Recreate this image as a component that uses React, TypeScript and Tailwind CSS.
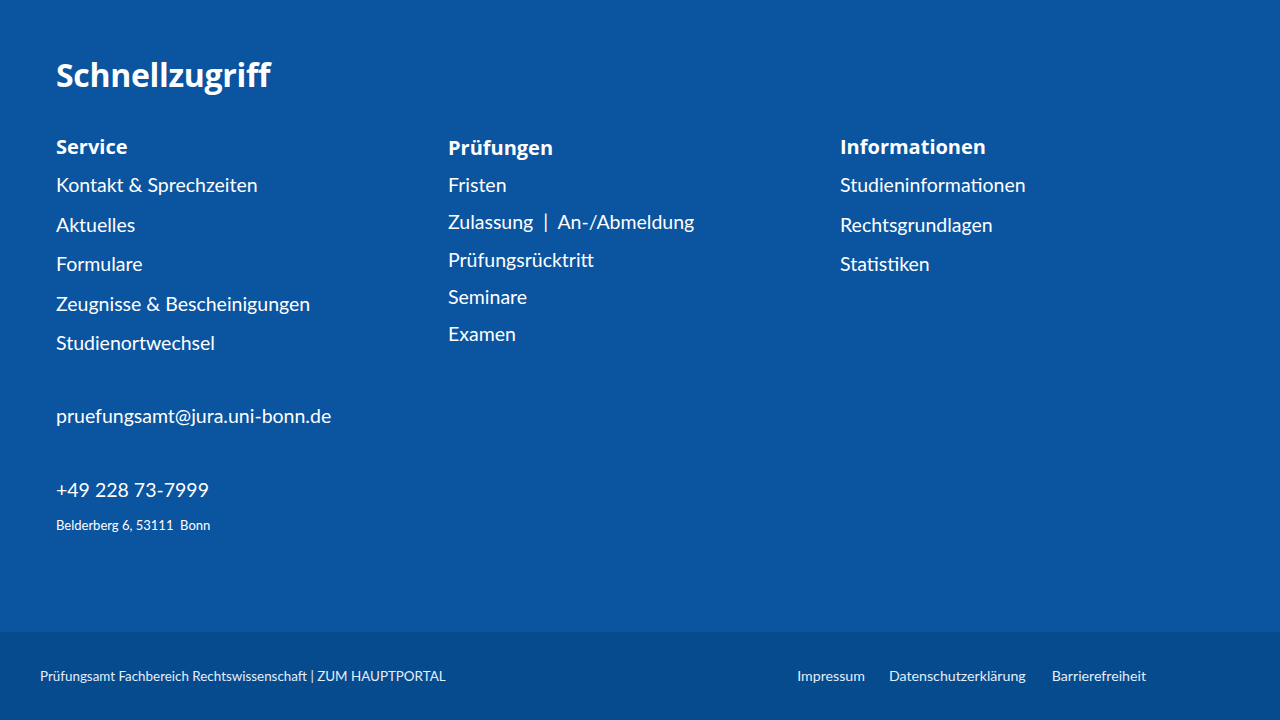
export default function App() {
  const body = { fontFamily: "Lato, 'Open Sans', sans-serif" };
  const head = { fontFamily: "'Open Sans', Lato, sans-serif" };
  return (
    <div className="w-[1280px] h-[720px] flex flex-col bg-[#0a54a0] text-white" style={body}>
      <main className="flex-1 px-14 pt-[55px]">
        <h1 className="text-[32px] font-bold leading-[40px] tracking-[-0.3px]" style={head}>
          Schnellzugriff
        </h1>
        <div className="grid grid-cols-[392px_392px_1fr] mt-[40px]">
          <div>
            <h2 className="text-[20px] font-bold leading-[24px]" style={head}>Service</h2>
            <ul className="mt-[14px] flex flex-col text-[19.5px] leading-[23px] gap-[16.5px]">
              <li>Kontakt &amp; Sprechzeiten</li>
              <li>Aktuelles</li>
              <li>Formulare</li>
              <li>Zeugnisse &amp; Bescheinigungen</li>
              <li>Studienortwechsel</li>
            </ul>
            <p className="mt-[50px] text-[19.5px] leading-[23px]">pruefungsamt@jura.uni-bonn.de</p>
            <p className="mt-[51px] text-[19.5px] leading-[23px]">+49 228 73-7999</p>
            <p className="mt-[16px] text-[13px] leading-[16px]">Belderberg 6, 53111&nbsp; Bonn</p>
          </div>
          <div>
            <h2 className="text-[20px] font-bold leading-[24px] mt-[1px]" style={head}>Prüfungen</h2>
            <ul className="mt-[13px] flex flex-col text-[19.5px] leading-[23px] gap-[14.3px]">
              <li>Fristen</li>
              <li>Zulassung&nbsp; |&nbsp; An-/Abmeldung</li>
              <li>Prüfungsrücktritt</li>
              <li>Seminare</li>
              <li>Examen</li>
            </ul>
          </div>
          <div>
            <h2 className="text-[20px] font-bold leading-[24px]" style={head}>Informationen</h2>
            <ul className="mt-[14px] flex flex-col text-[19.5px] leading-[23px] gap-[16.5px]">
              <li>Studieninformationen</li>
              <li>Rechtsgrundlagen</li>
              <li>Statistiken</li>
            </ul>
          </div>
        </div>
      </main>
      <footer className="h-[88px] bg-[#064b8e] flex items-center justify-between pl-10 pr-[134px] text-[#e3eefb]">
        <span className="text-[13.4px]">Prüfungsamt Fachbereich Rechtswissenschaft | ZUM HAUPTPORTAL</span>
        <nav className="flex gap-6 text-[14.2px]">
          <span>Impressum</span>
          <span>Datenschutzerklärung</span>
          <span className="ml-[2px]">Barrierefreiheit</span>
        </nav>
      </footer>
    </div>
  );
}
